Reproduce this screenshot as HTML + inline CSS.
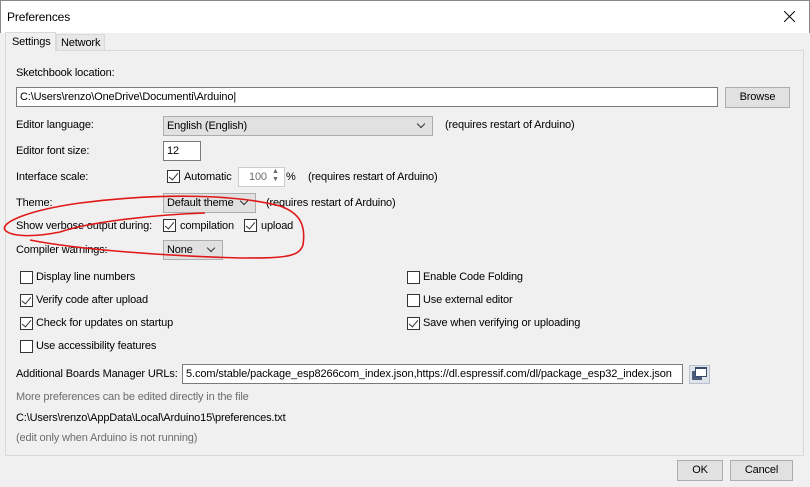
<!DOCTYPE html>
<html><head><meta charset="utf-8"><style>
*{box-sizing:border-box;margin:0;padding:0}
body{width:810px;height:487px;overflow:hidden;background:#f0f0f0;font-family:"Liberation Sans",sans-serif;font-size:11px;color:#000;position:relative;letter-spacing:-0.15px}
.a{position:absolute;white-space:nowrap}
.inp{position:absolute;background:#fff;border:1px solid #7a7a7a;height:20px;padding:3px 3px;white-space:nowrap;overflow:hidden}
.sel{position:absolute;background:#e1e1e1;border:1px solid #adadad;height:20px;padding:3px 3px}
.sel:after{content:"";position:absolute;right:8px;top:4px;width:5px;height:5px;border-right:1px solid #333;border-bottom:1px solid #333;transform:rotate(45deg)}
.btn{position:absolute;background:#e1e1e1;border:1px solid #adadad;text-align:center;line-height:19px}
.cb{position:absolute;width:13px;height:13px;border:1px solid #333;background:#fff}
.cb.c:after{content:"";position:absolute;left:3px;top:0px;width:4px;height:8px;border-right:1px solid #333;border-bottom:1px solid #333;transform:rotate(40deg)}
.g{color:#6d6d6d}
</style></head><body>
<div class="a" style="left:0;top:0;width:810px;height:33px;background:#fff;border:1px solid #888;border-bottom:none"></div>
<div class="a" style="left:7px;top:10px;font-size:12px">Preferences</div>
<svg class="a" style="left:784px;top:11px" width="11" height="11"><path d="M0 0L11 11M11 0L0 11" stroke="#111" stroke-width="1.1"/></svg>
<div class="a" style="left:5px;top:50px;width:799px;height:406px;border:1px solid #d9d9d9;background:#f0f0f0"></div>
<div class="a" style="left:5px;top:32px;width:51px;height:19px;background:#f0f0f0;border:1px solid #d9d9d9;border-bottom:none;padding:3px 0 0 6px">Settings</div>
<div class="a" style="left:56px;top:34px;width:49px;height:16px;background:#e8e8e8;border:1px solid #d9d9d9;border-bottom:none;padding:2px 0 0 4px">Network</div>
<div class="a" style="left:16px;top:67px">Sketchbook location:</div>
<div class="inp" style="left:16px;top:87px;width:702px">C:\Users\renzo\OneDrive\Documenti\Arduino|</div>
<div class="btn" style="left:725px;top:87px;width:65px;height:21px">Browse</div>
<div class="a" style="left:16px;top:119px">Editor language:</div>
<div class="sel" style="left:163px;top:116px;width:270px">English (English)</div>
<div class="a" style="left:445px;top:119px">(requires restart of Arduino)</div>
<div class="a" style="left:16px;top:145px">Editor font size:</div>
<div class="inp" style="left:163px;top:141px;width:38px">12</div>
<div class="a" style="left:16px;top:171px">Interface scale:</div>
<div class="cb c" style="left:167px;top:170px"></div>
<div class="a" style="left:184px;top:171px">Automatic</div>
<div class="inp g" style="left:238px;top:167px;width:47px;border-color:#ccc;padding-left:10px">100</div>
<div class="a" style="left:272px;top:168px;font-size:7px;color:#666;line-height:8px">▲<br>▼</div>
<div class="a" style="left:286px;top:171px">%</div>
<div class="a" style="left:308px;top:171px">(requires restart of Arduino)</div>
<div class="a" style="left:16px;top:197px">Theme:</div>
<div class="sel" style="left:163px;top:193px;width:93px">Default theme</div>
<div class="a" style="left:266px;top:197px">(requires restart of Arduino)</div>
<div class="a" style="left:16px;top:220px">Show verbose output during:</div>
<div class="cb c" style="left:163px;top:219px"></div>
<div class="a" style="left:180px;top:220px">compilation</div>
<div class="cb c" style="left:244px;top:219px"></div>
<div class="a" style="left:261px;top:220px">upload</div>
<div class="a" style="left:16px;top:244px">Compiler warnings:</div>
<div class="sel" style="left:163px;top:240px;width:60px">None</div>
<div class="cb" style="left:20px;top:271px"></div><div class="a" style="left:36px;top:271px">Display line numbers</div>
<div class="cb c" style="left:20px;top:294px"></div><div class="a" style="left:36px;top:294px">Verify code after upload</div>
<div class="cb c" style="left:20px;top:317px"></div><div class="a" style="left:36px;top:317px">Check for updates on startup</div>
<div class="cb" style="left:20px;top:340px"></div><div class="a" style="left:36px;top:340px">Use accessibility features</div>
<div class="cb" style="left:407px;top:271px"></div><div class="a" style="left:423px;top:271px">Enable Code Folding</div>
<div class="cb" style="left:407px;top:294px"></div><div class="a" style="left:423px;top:294px">Use external editor</div>
<div class="cb c" style="left:407px;top:317px"></div><div class="a" style="left:423px;top:317px">Save when verifying or uploading</div>
<div class="a" style="left:16px;top:368px">Additional Boards Manager URLs:</div>
<div class="inp" style="left:182px;top:364px;width:501px;letter-spacing:-0.1px">5.com/stable/package_esp8266com_index.json,https://dl.espressif.com/dl/package_esp32_index.json</div>
<div class="a" style="left:689px;top:365px;width:21px;height:19px;background:#dfe3ea;border:1px solid #b8c0cc"></div>
<div class="a" style="left:692px;top:371px;width:10px;height:9px;background:#4a5a7a"></div>
<div class="a" style="left:695px;top:367px;width:12px;height:10px;background:#fff;border:1px solid #3a4a6a;border-top-width:2px"></div>
<div class="a g" style="left:16px;top:391px">More preferences can be edited directly in the file</div>
<div class="a" style="left:16px;top:412px">C:\Users\renzo\AppData\Local\Arduino15\preferences.txt</div>
<div class="a g" style="left:16px;top:432px">(edit only when Arduino is not running)</div>
<div class="btn" style="left:677px;top:460px;width:46px;height:21px">OK</div>
<div class="btn" style="left:730px;top:460px;width:63px;height:21px">Cancel</div>
<svg class="a" style="left:0;top:0" width="810" height="487"><path d="M205 213 C150 215 90 222 60 232 C30 238 10 236 5 230 C0 222 30 210 80 203 C150 194 230 193 280 206 C300 213 306 225 303 245 C299 258 280 258 240 258 C170 256 80 250 30 240" fill="none" stroke="#e01818" stroke-width="1.6"/></svg>
</body></html>
